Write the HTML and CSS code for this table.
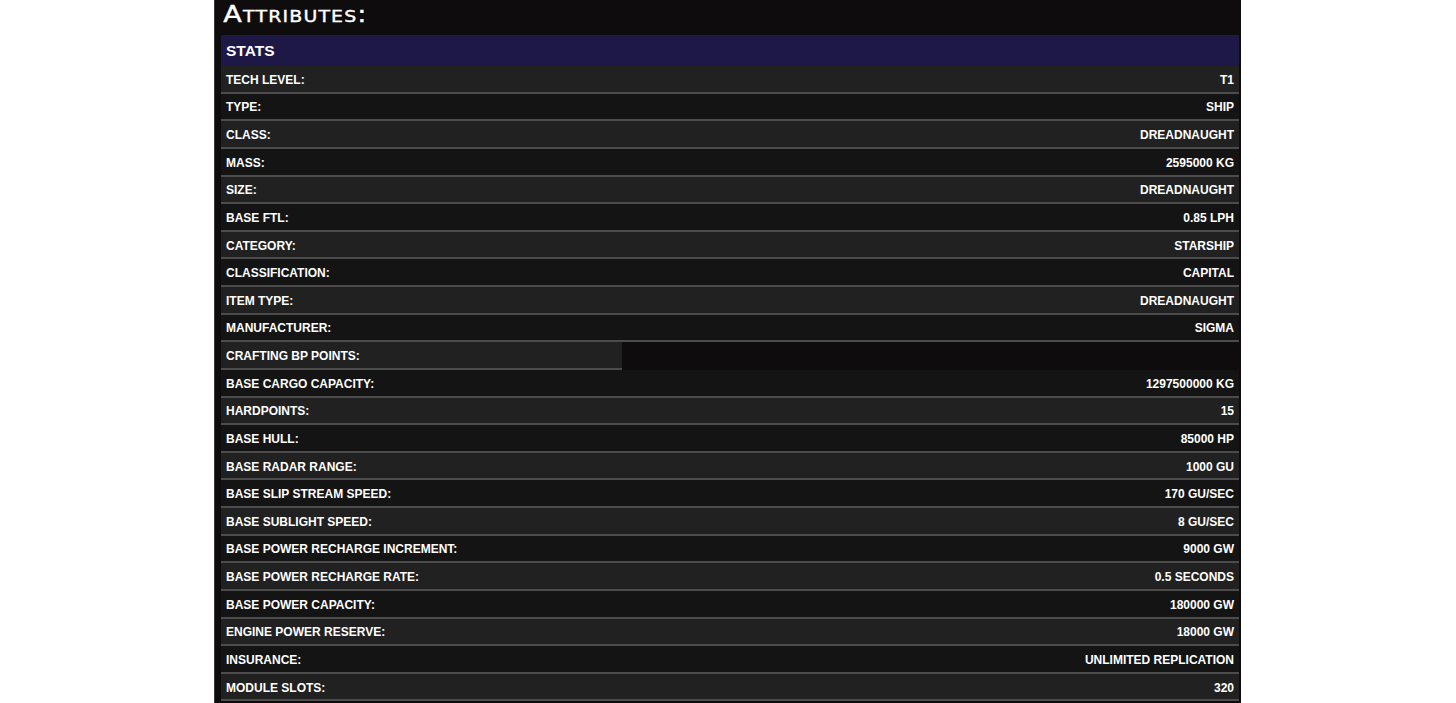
FILE: index.html
```html
<!DOCTYPE html>
<html lang="en">
<head>
  <meta charset="UTF-8">
  <meta name="viewport" content="width=device-width, initial-scale=1.0">
  <title>Attributes</title>
  <link rel="stylesheet" href="styles.css">
</head>
<body>
  <div class="panel">
    <h1 class="title">Attributes:</h1>
    <div class="stats">
      <div class="stats-head">STATS</div>
      <div class="row"><span>TECH LEVEL:</span><span>T1</span></div>
      <div class="row"><span>TYPE:</span><span>SHIP</span></div>
      <div class="row"><span>CLASS:</span><span>DREADNAUGHT</span></div>
      <div class="row"><span>MASS:</span><span>2595000 KG</span></div>
      <div class="row"><span>SIZE:</span><span>DREADNAUGHT</span></div>
      <div class="row"><span>BASE FTL:</span><span>0.85 LPH</span></div>
      <div class="row"><span>CATEGORY:</span><span>STARSHIP</span></div>
      <div class="row"><span>CLASSIFICATION:</span><span>CAPITAL</span></div>
      <div class="row"><span>ITEM TYPE:</span><span>DREADNAUGHT</span></div>
      <div class="row"><span>MANUFACTURER:</span><span>SIGMA</span></div>
      <div class="row partial"><span>CRAFTING BP POINTS:</span></div>
      <div class="row"><span>BASE CARGO CAPACITY:</span><span>1297500000 KG</span></div>
      <div class="row"><span>HARDPOINTS:</span><span>15</span></div>
      <div class="row"><span>BASE HULL:</span><span>85000 HP</span></div>
      <div class="row"><span>BASE RADAR RANGE:</span><span>1000 GU</span></div>
      <div class="row"><span>BASE SLIP STREAM SPEED:</span><span>170 GU/SEC</span></div>
      <div class="row"><span>BASE SUBLIGHT SPEED:</span><span>8 GU/SEC</span></div>
      <div class="row"><span>BASE POWER RECHARGE INCREMENT:</span><span>9000 GW</span></div>
      <div class="row"><span>BASE POWER RECHARGE RATE:</span><span>0.5 SECONDS</span></div>
      <div class="row"><span>BASE POWER CAPACITY:</span><span>180000 GW</span></div>
      <div class="row"><span>ENGINE POWER RESERVE:</span><span>18000 GW</span></div>
      <div class="row"><span>INSURANCE:</span><span>UNLIMITED REPLICATION</span></div>
      <div class="row"><span>MODULE SLOTS:</span><span>320</span></div>
    </div>
  </div>
</body>
</html>
```
FILE: styles.css
```css
body {
  margin: 0;
  padding: 0 1px 0 0;
  background-color: #fff;
  font-family: "Liberation Sans", Arial, sans-serif;
  overflow: hidden;
}
.panel {
  width: 1018px;
  margin: 0 auto;
  padding: 0 2px 0 6px;
  height: 703px;
  background-color: #0e0c0c;
  border-left: 1px solid #3a3a3a;
}
.title {
  margin: 0;
  height: 35px;
  padding-left: 2px;
  font-family: "DejaVu Sans", sans-serif;
  font-variant: small-caps;
  font-weight: normal;
  font-size: 23px;
  line-height: 28px;
  color: #fff;
  letter-spacing: 1px;
  transform: scaleX(1.18);
  transform-origin: left center;
  -webkit-text-stroke: 0.4px #fff;
}
.stats-head {
  height: 31px;
  line-height: 32px;
  padding-left: 5px;
  background-color: #1d1846;
  color: #fff;
  font-weight: bold;
  font-size: 15.5px;
}
.row {
  display: flex;
  justify-content: space-between;
  align-items: center;
  height: 27.64px;
  box-sizing: border-box;
  padding: 2px 5px 0;
  border-bottom: 2px solid #4c4c4c;
  color: #fff;
  font-size: 12px;
  font-weight: bold;
}
.row:nth-of-type(even) {
  background-color: #212121;
}
.row:nth-of-type(odd) {
  background-color: #141414;
}
.row.partial {
  width: 401px;
}
```
